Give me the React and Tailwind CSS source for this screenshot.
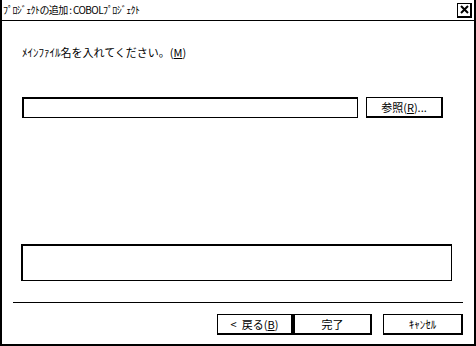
const FONT = { fontFamily: '"Noto Sans CJK JP", "MS UI Gothic", sans-serif' }

function Btn({ children, className = '' }) {
  return (
    <div
      className={`flex items-center justify-center h-[21px] bg-white border-black text-[11px] leading-none text-black ${className}`}
    >
      {children}
    </div>
  )
}

export default function App() {
  return (
    <div
      className="flex flex-col w-[476px] h-[346px] bg-white border-l-2 border-r-2 border-b-2 border-black text-black"
      style={FONT}
    >
      {/* title bar */}
      <div className="flex items-center justify-between h-[21px] shrink-0 border-b border-black pl-px pr-[2px]">
        <span className="text-[10px] leading-none tracking-[-0.6px]">ﾌﾟﾛｼﾞｪｸﾄの追加 : COBOLﾌﾟﾛｼﾞｪｸﾄ</span>
        <div className="flex items-center justify-center w-[15px] h-[15px] border-t border-l border-r-2 border-b-2 border-black">
          <svg width="9" height="9" viewBox="0 0 9 9">
            <path d="M1 1 L8 8 M8 1 L1 8" stroke="black" strokeWidth="2" fill="none" />
          </svg>
        </div>
      </div>

      {/* label */}
      <div className="mt-[24px] pl-[20px] text-[11px] leading-[14px] h-[14px]">
        ﾒｲﾝﾌｧｲﾙ名を入れてください。(<span className="underline">M</span>)
      </div>

      {/* file row */}
      <div className="flex items-start mt-[38px] pl-[20px] gap-[8px]">
        <div className="w-[336px] h-[21px] border-t-2 border-l-2 border-r border-b border-black bg-white" />
        <Btn className="w-[77px] border-t border-l border-r-2 border-b-2">
          参照(<span className="underline">R</span>)...
        </Btn>
      </div>

      {/* message box */}
      <div className="ml-[19px] mt-[126px] w-[431px] h-[37px] border-t-2 border-l-2 border-r border-b border-black" />

      {/* separator */}
      <div className="ml-[11px] mt-[21px] w-[450px] h-px bg-black" />

      {/* buttons */}
      <div className="flex items-start mt-[11px] ml-[215px]">
        <Btn className="w-[76px] border-t border-l border-r-2 border-b-2">
          <span className="mr-[5px]">&lt;</span>戻る(<span className="underline">B</span>)
        </Btn>
        <Btn className="w-[79px] border-t border-l-2 border-r-2 border-b-2">完了</Btn>
        <Btn className="ml-[11px] w-[80px] border-t border-l border-r-2 border-b-2">ｷｬﾝｾﾙ</Btn>
      </div>
    </div>
  )
}
